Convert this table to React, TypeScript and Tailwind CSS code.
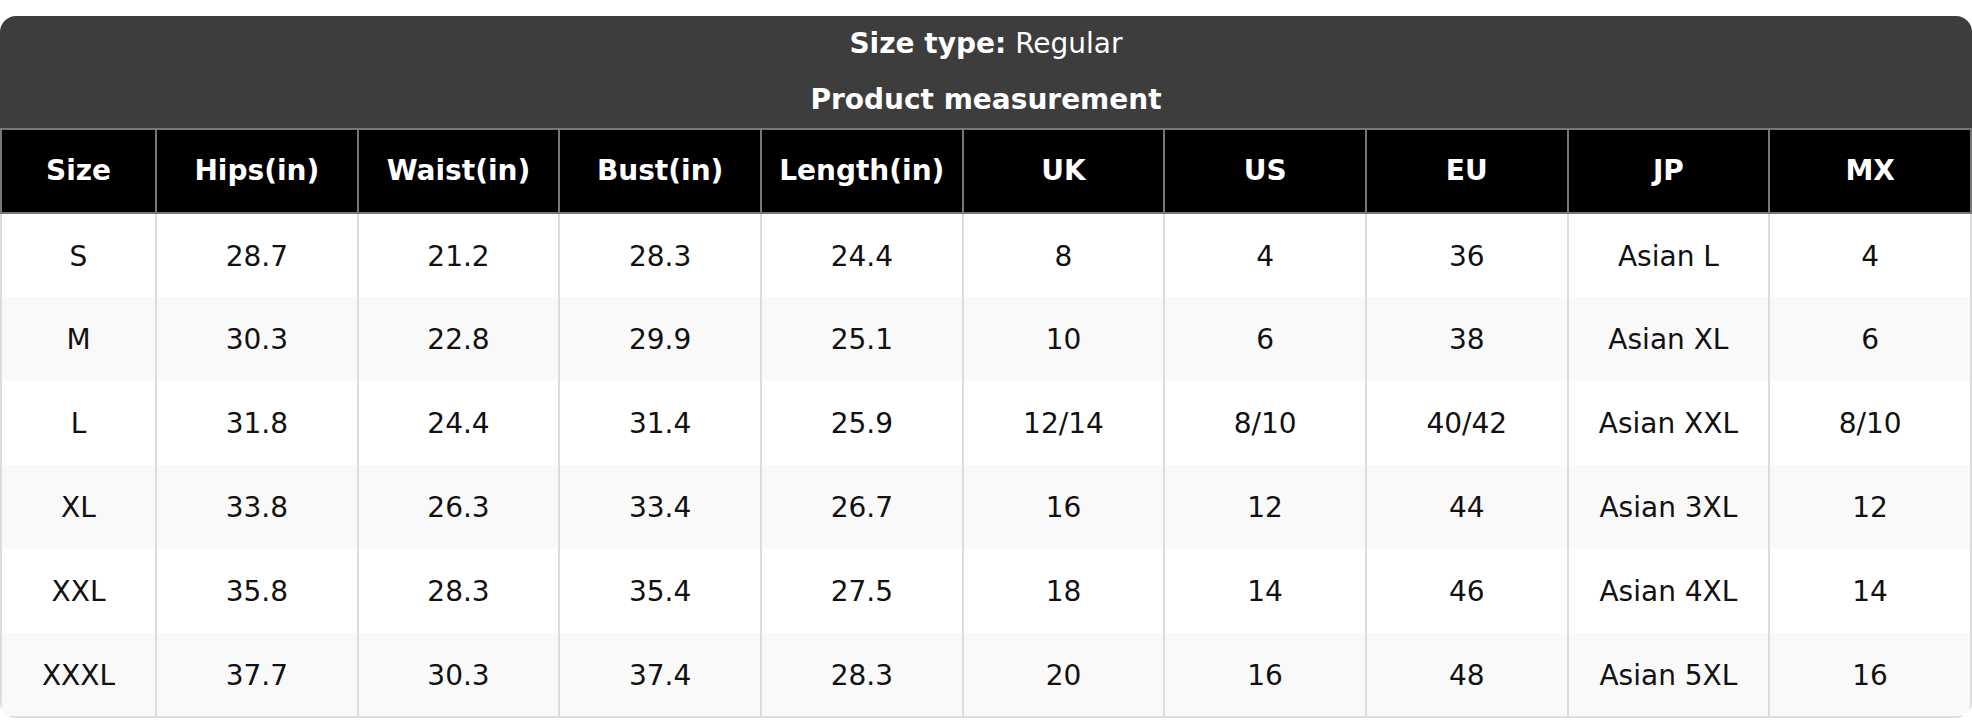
const columns = ["Size", "Hips(in)", "Waist(in)", "Bust(in)", "Length(in)", "UK", "US", "EU", "JP", "MX"];

const rows: string[][] = [
  ["S", "28.7", "21.2", "28.3", "24.4", "8", "4", "36", "Asian L", "4"],
  ["M", "30.3", "22.8", "29.9", "25.1", "10", "6", "38", "Asian XL", "6"],
  ["L", "31.8", "24.4", "31.4", "25.9", "12/14", "8/10", "40/42", "Asian XXL", "8/10"],
  ["XL", "33.8", "26.3", "33.4", "26.7", "16", "12", "44", "Asian 3XL", "12"],
  ["XXL", "35.8", "28.3", "35.4", "27.5", "18", "14", "46", "Asian 4XL", "14"],
  ["XXXL", "37.7", "30.3", "37.4", "28.3", "20", "16", "48", "Asian 5XL", "16"],
];

export default function App() {
  return (
    <div className="bg-white pt-[16px] font-['DejaVu_Sans',sans-serif] text-[28px]">
      <div className="overflow-hidden rounded-[16px] bg-white">
        {/* Title block */}
        <div className="bg-[#3d3d3d] text-white">
          <div className="flex h-[56px] items-center justify-center">
            <span className="font-bold">Size type:</span>
            <span className="ml-[9px]">Regular</span>
          </div>
          <div className="flex h-[56px] items-center justify-center font-bold">
            Product measurement
          </div>
        </div>

        <table className="w-full table-fixed border-collapse">
          <colgroup>
            <col className="w-[155px]" />
            {columns.slice(1).map((c) => (
              <col key={c} />
            ))}
          </colgroup>
          <thead>
            <tr className="h-[84px] bg-black text-white">
              {columns.map((c) => (
                <th key={c} className="border-2 border-[#777777] text-center font-bold">
                  {c}
                </th>
              ))}
            </tr>
          </thead>
          <tbody>
            {rows.map((row, i) => (
              <tr key={row[0]} className={`h-[84px] ${i % 2 === 1 ? "bg-[#f9f9f9]" : "bg-white"}`}>
                {row.map((cell, j) => (
                  <td
                    key={j}
                    className={`border-x-2 border-[#dddddd] pt-[2px] text-center text-[#111111] ${
                      i === rows.length - 1 ? "border-b-2" : ""
                    }`}
                  >
                    {cell}
                  </td>
                ))}
              </tr>
            ))}
          </tbody>
        </table>
      </div>
    </div>
  );
}
